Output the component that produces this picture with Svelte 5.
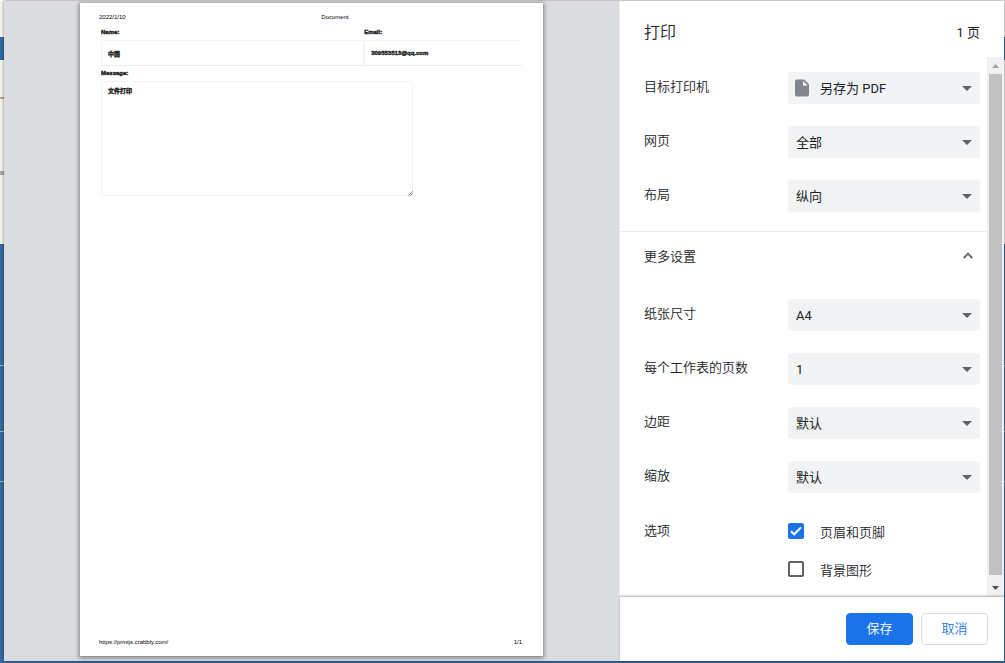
<script lang="ts">
type Setting = {
  id: string;
  label: string;
  options: string[];
  value: string;
  icon?: boolean;
};

let basics = $state<Setting[]>([
  {
    id: "destination",
    label: "目标打印机",
    options: ["另存为 PDF"],
    value: "另存为 PDF",
    icon: true,
  },
  { id: "pages", label: "网页", options: ["全部"], value: "全部" },
  { id: "layout", label: "布局", options: ["纵向"], value: "纵向" },
]);

let advanced = $state<Setting[]>([
  { id: "paper", label: "纸张尺寸", options: ["A4"], value: "A4" },
  { id: "per-sheet", label: "每个工作表的页数", options: ["1"], value: "1" },
  { id: "margins", label: "边距", options: ["默认"], value: "默认" },
  { id: "scale", label: "缩放", options: ["默认"], value: "默认" },
]);

let headers = $state(true);
let backgrounds = $state(false);
let expanded = $state(true);

let name = $state("中国");
let email = $state("309553513@qq.com");
let message = $state("文件打印");
</script>

{#snippet settingRow(item: Setting)}
  <div class="row">
    <label class="row-label" for={item.id}>{item.label}</label>
    <div class="picker">
      <select id={item.id} class:with-icon={item.icon} bind:value={item.value}>
        {#each item.options as option}
          <option>{option}</option>
        {/each}
      </select>
      {#if item.icon}
        <svg class="file-icon" width="14" height="18" viewBox="0 0 14 18" aria-hidden="true">
          <path
            d="M2 0.5h7.2L14 5.3V15.5a2 2 0 0 1-2 2H2a2 2 0 0 1-2-2v-13a2 2 0 0 1 2-2z"
            fill="#80868b"
          />
          <path d="M8 2v4.5h4.6z" fill="#fff" />
        </svg>
      {/if}
      <svg class="caret" width="10" height="5" viewBox="0 0 10 5" aria-hidden="true">
        <path d="M0 0h10L5 5z" fill="#5f6368" />
      </svg>
    </div>
  </div>
{/snippet}

<div class="site">
  <div class="dialog" role="dialog" aria-labelledby="print-title">
    <section class="preview">
      <article class="sheet">
        <header class="sheet-header">
          <span class="date">2022/1/10</span>
          <span class="doc-title">Document</span>
        </header>
        <form class="sheet-form">
          <div class="field">
            <label for="f-name">Name:</label>
            <input id="f-name" type="text" bind:value={name} />
          </div>
          <div class="field">
            <label for="f-email">Email:</label>
            <input id="f-email" class="cut" type="text" bind:value={email} />
          </div>
          <div class="field wide">
            <label for="f-message">Message:</label>
            <div class="area">
              <textarea id="f-message" bind:value={message}></textarea>
              <svg class="grip" width="5" height="5" viewBox="0 0 5 5" aria-hidden="true">
                <path d="M0 5L5 0M2 5L5 2" stroke="#999" stroke-width="1" />
              </svg>
            </div>
          </div>
        </form>
        <footer class="sheet-footer">
          <span>https://printjs.crabbly.com/</span>
          <span>1/1</span>
        </footer>
      </article>
    </section>

    <aside class="sidebar">
      <header class="head">
        <h1 id="print-title">打印</h1>
        <span class="count">1 页</span>
      </header>

      <div class="scroller">
        <div class="settings">
          <div class="group">
            {#each basics as item (item.id)}
              {@render settingRow(item)}
            {/each}
          </div>

          <button
            class="more"
            type="button"
            aria-expanded={expanded}
            onclick={() => (expanded = !expanded)}
          >
            <span>更多设置</span>
            <svg width="10" height="7" viewBox="0 0 10 7" class:closed={!expanded} aria-hidden="true">
              <path d="M0.7 6L5 1.6L9.3 6" fill="none" stroke="#5f6368" stroke-width="1.8" />
            </svg>
          </button>

          {#if expanded}
            <div class="group last">
              {#each advanced as item (item.id)}
                {@render settingRow(item)}
              {/each}
              <div class="row options" role="group" aria-labelledby="options-label">
                <span class="row-label" id="options-label">选项</span>
                <div class="checks">
                  <label class="check">
                    <input type="checkbox" bind:checked={headers} />
                    <svg width="16" height="16" viewBox="0 0 16 16" aria-hidden="true">
                      <path d="M3 8.2L6.2 11.3L13 4.4" fill="none" stroke="#fff" stroke-width="2" />
                    </svg>
                    <span>页眉和页脚</span>
                  </label>
                  <label class="check">
                    <input type="checkbox" bind:checked={backgrounds} />
                    <svg width="16" height="16" viewBox="0 0 16 16" aria-hidden="true">
                      <path d="M3 8.2L6.2 11.3L13 4.4" fill="none" stroke="#fff" stroke-width="2" />
                    </svg>
                    <span>背景图形</span>
                  </label>
                </div>
              </div>
            </div>
          {/if}
        </div>

        <div class="scrollbar" aria-hidden="true">
          <svg width="17" height="17" viewBox="0 0 17 17">
            <path d="M5 11h7L8.5 7z" fill="#a3a3a3" />
          </svg>
          <div class="thumb"></div>
          <svg width="17" height="22" viewBox="0 0 17 22">
            <path d="M5 11h7L8.5 15z" fill="#505050" />
          </svg>
        </div>
      </div>

      <footer class="actions">
        <button class="btn primary" type="button">保存</button>
        <button class="btn" type="button">取消</button>
      </footer>
    </aside>
  </div>
</div>

<style>
  .site {
    box-sizing: border-box;
    height: 100vh;
    min-height: 663px;
    padding: 1px 1px 2px 4px;
    display: flex;
    background:
      linear-gradient(
          transparent 97px,
          #c9a184 97px 99px,
          transparent 99px 171px,
          #a9a5ac 171px 175px,
          transparent 175px
        )
        left top / 4px 100% no-repeat,
      linear-gradient(
        #f4f4f2 37px,
        #316a9f 37px 60px,
        #f4f4f2 60px 244px,
        #366ba0 244px 365px,
        #9ab6d0 365px 366px,
        #366ba0 366px 431px,
        #9ab6d0 431px 432px,
        #366ba0 432px 481px,
        #9ab6d0 481px 482px,
        #366ba0 482px
      );
    font-family: Roboto, "Noto Sans CJK SC", sans-serif;
    font-size: 13px;
    font-weight: 350;
    color: #202124;
  }
  .dialog {
    flex: 1;
    min-width: 0;
    display: flex;
    box-shadow: 0 0 3px rgba(0, 0, 0, 0.5);
  }

  /* page preview */
  .preview {
    box-sizing: border-box;
    flex: 1;
    min-width: 0;
    padding: 2px 0 5px;
    display: flex;
    justify-content: center;
    background: #dadce0;
    border-right: 1px solid #e8eaed;
  }
  .sheet {
    box-sizing: border-box;
    aspect-ratio: 78 / 110;
    padding: 10px 21px 10px 19px;
    display: flex;
    flex-direction: column;
    background: #fff;
    box-shadow: 0 1px 4px 1px rgba(32, 33, 44, 0.5);
    font-family: "Liberation Sans", "Noto Sans CJK SC", sans-serif;
    font-size: 6px;
    font-weight: 400;
    line-height: 8px;
    color: #000;
  }
  .sheet-header {
    display: flex;
  }
  .date {
    width: 49px;
  }
  .doc-title {
    flex: 1;
    text-align: center;
  }
  .sheet-form {
    flex: 1;
    padding: 7px 0 0 2px;
    display: grid;
    grid-template-columns: 5fr 3fr;
    align-content: start;
    row-gap: 3px;
    font-weight: 700;
    color: #222;
    -webkit-text-stroke: 0.4px #222;
  }
  .field {
    display: flex;
    flex-direction: column;
    gap: 4px;
    min-width: 0;
  }
  .field input,
  .field textarea {
    box-sizing: border-box;
    width: 100%;
    margin: 0;
    border: 1px solid #f3f3f3;
    border-radius: 2px;
    background: #fff;
    font: inherit;
    color: inherit;
    outline: none;
  }
  .field input {
    height: 26px;
    padding: 0 6px;
    border-bottom-color: #ebebeb;
  }
  .field input.cut {
    border-right: 0;
    border-radius: 0;
  }
  .wide {
    grid-column: 1 / -1;
  }
  .area {
    position: relative;
    width: 74%;
    display: flex;
  }
  .field textarea {
    height: 115px;
    padding: 5px 6px;
    resize: none;
  }
  .grip {
    position: absolute;
    right: 0;
    bottom: 0;
  }
  .sheet-footer {
    display: flex;
    justify-content: space-between;
  }

  /* settings */
  .sidebar {
    flex: 0 0 384px;
    display: flex;
    flex-direction: column;
    background: #fff;
  }
  .head {
    box-sizing: border-box;
    height: 56px;
    padding: 4px 24px 0;
    display: flex;
    align-items: center;
    justify-content: space-between;
  }
  .head h1 {
    margin: 0;
    font-size: 16px;
    font-weight: inherit;
  }
  .count {
    font-weight: 400;
  }
  .scroller {
    flex: 1;
    min-height: 0;
    display: flex;
    overflow: hidden;
  }
  .settings {
    flex: 1;
    min-width: 0;
  }
  .group {
    padding: 4px 7px 8px 24px;
    border-bottom: 1px solid #e8eaed;
  }
  .group.last {
    padding-top: 6px;
    border-bottom: 0;
  }
  .row {
    display: flex;
    align-items: center;
    min-height: 54px;
  }
  .row-label {
    flex: 1;
    padding-bottom: 5px;
  }
  .picker {
    position: relative;
    width: 192px;
    display: flex;
  }
  .picker select {
    width: 100%;
    height: 32px;
    padding: 0 32px 0 8px;
    appearance: none;
    border: 0;
    border-radius: 4px;
    background: #f1f3f4;
    font: inherit;
    font-weight: 400;
    color: inherit;
  }
  .picker select.with-icon {
    padding-left: 32px;
  }
  .file-icon {
    position: absolute;
    left: 7px;
    top: 7px;
  }
  .caret {
    position: absolute;
    right: 8px;
    top: 14px;
  }
  .more {
    width: 100%;
    height: 50px;
    padding: 0 14px 3px 24px;
    display: flex;
    align-items: center;
    justify-content: space-between;
    border: 0;
    background: none;
    font: inherit;
    color: inherit;
  }
  .closed {
    transform: rotate(180deg);
  }
  .options {
    align-items: flex-start;
  }
  .options .row-label {
    line-height: 54px;
    padding-bottom: 0;
  }
  .checks {
    width: 192px;
    padding-top: 8px;
  }
  .check {
    height: 38px;
    display: grid;
    grid-template-columns: 16px 1fr;
    column-gap: 16px;
    align-items: center;
  }
  .check input {
    grid-area: 1 / 1;
    box-sizing: border-box;
    width: 16px;
    height: 16px;
    margin: 0;
    appearance: none;
    border: 2px solid #5f6368;
    border-radius: 2px;
  }
  .check input:checked {
    border-color: #1a73e8;
    background: #1a73e8;
  }
  .check svg {
    grid-area: 1 / 1;
    pointer-events: none;
  }

  .scrollbar {
    width: 17px;
    display: flex;
    flex-direction: column;
    background: #f1f1f1;
  }
  .thumb {
    flex: 1;
    margin: 0 2px;
    background: #c1c1c1;
  }

  .actions {
    position: relative;
    padding: 16px;
    display: flex;
    justify-content: flex-end;
    gap: 8px;
    background: #fff;
    box-shadow: 0 -1px 2px rgba(60, 64, 67, 0.4);
  }
  .btn {
    box-sizing: border-box;
    min-width: 67px;
    height: 32px;
    padding: 0 16px 3px;
    border: 1px solid #dadce0;
    border-radius: 4px;
    background: #fff;
    font: inherit;
    color: #1a73e8;
  }
  .btn.primary {
    border-color: #1a73e8;
    background: #1a73e8;
    color: #fff;
  }
</style>
